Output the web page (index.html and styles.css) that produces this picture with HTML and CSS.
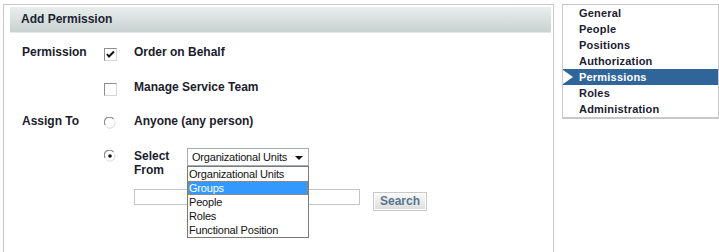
FILE: index.html
```html
<!DOCTYPE html>
<html lang="en">

<head>
    <meta charset="UTF-8">
    <title>Add Permission</title>
    <link rel="stylesheet" href="styles.css">
</head>

<body>
    <div class="page">
        <div class="panel">
            <div class="panel-header">Add Permission</div>
            <div class="form-row">
                <div class="field-label">Permission</div>
                <div class="field-ctrl"><span class="checkbox checked">
                    <svg width="9" height="9" viewBox="0 0 9 9"><path d="M1 4 L3 6.5 L8 1.5" fill="none" stroke="#111" stroke-width="2"/></svg>
                </span></div>
                <div class="field-text">Order on Behalf</div>
            </div>
            <div class="form-row">
                <div class="field-label"></div>
                <div class="field-ctrl"><span class="checkbox"></span></div>
                <div class="field-text">Manage Service Team</div>
            </div>
            <div class="form-row">
                <div class="field-label">Assign To</div>
                <div class="field-ctrl"><span class="radio">
                    <svg width="12" height="12" viewBox="0 0 12 12">
                        <circle cx="6" cy="6" r="5.5" fill="#fff"/>
                        <path d="M1.2 8 A5 5 0 0 1 9.5 2.2" fill="none" stroke="#8a8a8a" stroke-width="1.2"/>
                        <path d="M2.5 9.8 A5 5 0 0 0 10.3 3.8" fill="none" stroke="#e2e2e2" stroke-width="1.2"/>
                    </svg>
                </span></div>
                <div class="field-text">Anyone (any person)</div>
            </div>
            <div class="form-row last">
                <div class="field-label"></div>
                <div class="field-ctrl"><span class="radio">
                    <svg width="12" height="12" viewBox="0 0 12 12">
                        <circle cx="6" cy="6" r="5.5" fill="#fff"/>
                        <path d="M1.2 8 A5 5 0 0 1 9.5 2.2" fill="none" stroke="#8a8a8a" stroke-width="1.2"/>
                        <path d="M2.5 9.8 A5 5 0 0 0 10.3 3.8" fill="none" stroke="#e2e2e2" stroke-width="1.2"/>
                        <circle cx="6" cy="6" r="1.8" fill="#111"/>
                    </svg>
                </span></div>
                <div class="field-col">
                    <div class="select-line">
                        <div class="field-text select-from">Select From</div>
                        <div class="select-wrap">
                            <div class="select-box">
                                <span>Organizational Units</span>
                                <span class="select-arrow"></span>
                            </div>
                            <!-- 展开的下拉列表 -->
                            <ul class="select-list">
                                <li>Organizational Units</li>
                                <li class="active">Groups</li>
                                <li>People</li>
                                <li>Roles</li>
                                <li>Functional Position</li>
                            </ul>
                        </div>
                    </div>
                    <div class="search-line">
                        <input type="text" class="search-input">
                        <button class="search-btn">Search</button>
                    </div>
                </div>
            </div>
        </div>

        <ul class="side-nav">
            <li>General</li>
            <li>People</li>
            <li>Positions</li>
            <li>Authorization</li>
            <li class="current">Permissions</li>
            <li>Roles</li>
            <li>Administration</li>
        </ul>
    </div>
</body>

</html>
```

FILE: styles.css
```css
html, body {
    margin: 0;
    padding: 0;
    background: #fff;
    overflow: hidden;
}

body {
    font-family: "Liberation Sans", Arial, sans-serif;
    color: #1c1c2c;
}

.page {
    display: flex;
    align-items: flex-start;
    padding: 4px 0 0 3px;
}

/* 左侧主面板，底边延伸到窗口外 */
.panel {
    width: 549px;
    height: 247px;
    border: 1px solid #c8c8c8;
    border-bottom: none;
}

.panel-header {
    margin: 2px 2px 0 6px;
    height: 25px;
    line-height: 25px;
    padding-left: 11px;
    font-size: 12px;
    font-weight: bold;
    color: #1d2433;
    background: linear-gradient(#e9eeed, #c9d2d0);
    border-bottom: 1px solid #e4e8e8;
}

.form-row {
    display: flex;
    align-items: flex-start;
    height: 34.5px;
    padding-top: 11px;
    box-sizing: border-box;
    font-size: 12px;
    font-weight: bold;
    line-height: 14px;
}

.panel-header + .form-row {
    margin-top: 1px;
}

.field-label {
    width: 82px;
    padding-left: 18px;
}

.field-ctrl {
    width: 30px;
}

.field-text {
    white-space: nowrap;
}

.checkbox {
    display: flex;
    align-items: center;
    justify-content: center;
    width: 11px;
    height: 11px;
    margin-top: 3px;
    border: 1px solid #8e8e8e;
    border-right-color: #d6d6d6;
    border-bottom-color: #d6d6d6;
    background: #fff;
}

.radio {
    display: block;
    width: 12px;
    height: 12px;
    margin-top: 3px;
}

.radio svg {
    display: block;
}

.last .radio {
    margin-top: 1px;
}

.field-col {
    display: flex;
    flex-direction: column;
}

.select-line {
    display: flex;
    align-items: flex-start;
}

.select-from {
    width: 53px;
    white-space: normal;
    line-height: 14px;
}

.select-wrap {
    position: relative;
    margin-top: -1px;
}

.select-box {
    display: flex;
    align-items: center;
    justify-content: space-between;
    box-sizing: border-box;
    width: 122px;
    height: 18px;
    padding: 0 5px 0 4px;
    border: 1px solid #a5acb2;
    font-weight: normal;
    font-size: 11px;
    letter-spacing: -0.2px;
    color: #111;
    background: #fff;
}

.select-arrow {
    width: 0;
    height: 0;
    border-left: 4px solid transparent;
    border-right: 4px solid transparent;
    border-top: 4px solid #111;
    margin-top: 2px;
}

/* 展开后覆盖在内容之上的选项列表 */
.select-list {
    position: absolute;
    left: 0;
    top: 18px;
    width: 122px;
    box-sizing: border-box;
    margin: 0;
    padding: 0;
    list-style: none;
    border: 1px solid #7a7a7a;
    background: #fff;
    font-weight: normal;
    font-size: 11px;
    letter-spacing: -0.2px;
    color: #111;
    z-index: 2;
}

.select-list li {
    height: 14px;
    line-height: 14px;
    padding-left: 1px;
    box-sizing: border-box;
}

.select-list li.active {
    background: #3399ff;
    color: #fff;
    border: 1px dotted #e07a10;
    line-height: 12px;
    padding-left: 0;
}

.search-line {
    display: flex;
    align-items: flex-start;
    margin-top: 12px;
}

.search-input {
    width: 226px;
    height: 16px;
    box-sizing: border-box;
    margin: 0;
    border: 1px solid #c4c4c4;
    padding: 0;
}

.search-btn {
    width: 54px;
    height: 19px;
    margin: 3px 0 0 13px;
    padding: 0;
    box-sizing: border-box;
    border: 1px solid #c8c8c8;
    outline: 1px solid #fff;
    outline-offset: -2px;
    background: linear-gradient(#fafafa, #dcdcdc);
    font-family: "Liberation Sans", Arial, sans-serif;
    font-size: 12px;
    font-weight: bold;
    color: #587591;
}

/* 右侧导航 */
.side-nav {
    width: 155px;
    margin: 0 0 0 8px;
    padding: 0;
    list-style: none;
    border: 1px solid #c8c8c8;
    border-bottom-width: 2px;
    font-size: 11px;
    font-weight: bold;
    letter-spacing: 0.2px;
    color: #1c2030;
}

.side-nav li {
    position: relative;
    height: 16px;
    line-height: 16px;
    padding-left: 16px;
}

.side-nav li.current {
    background: #30659a;
    color: #fff;
}

.side-nav li.current::before {
    content: "";
    position: absolute;
    left: 0;
    top: 1px;
    border-top: 7px solid transparent;
    border-bottom: 7px solid transparent;
    border-left: 10px solid #fff;
}
```
